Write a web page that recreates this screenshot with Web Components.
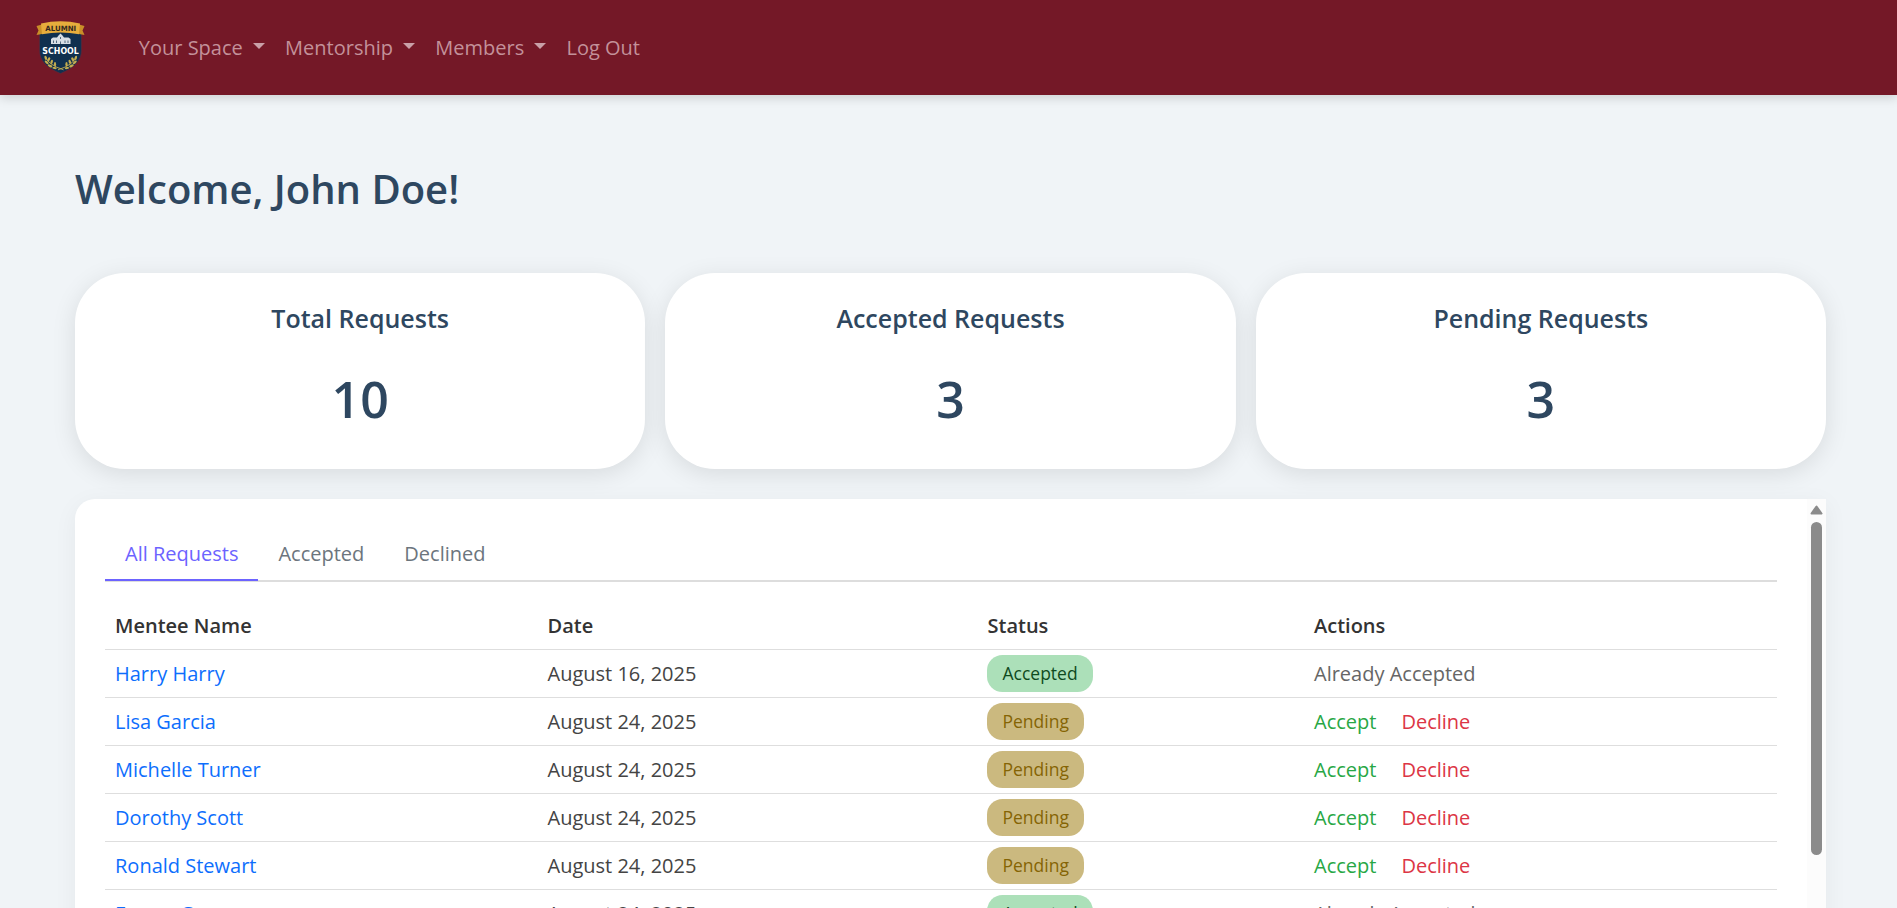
<!DOCTYPE html>
<html lang="en">
<head>
<meta charset="utf-8">
<title>Mentorship Dashboard</title>
<style>
html,body{margin:0;height:100%;overflow:hidden}
body{background:#f0f4f7;font:20px/27px "Open Sans","Noto Sans",sans-serif;color:#444}
</style>
</head>
<body>
<alumni-dashboard></alumni-dashboard>
<script>
const define = (name, html) => {
  const t = document.createElement('template');
  t.innerHTML = html;
  customElements.define(name, class extends HTMLElement {
    constructor() {
      super();
      this.attachShadow({ mode: 'open' }).appendChild(t.content.cloneNode(true));
    }
  });
};

define('school-crest', `<style>:host{display:block;width:50px;height:56px}svg{display:block}</style>
<svg width="50" height="56" viewBox="0 0 50 56">
<path d="M3.500 11H45.500V30C45.500 41 38 48 24.500 53.500C11 48 3.500 41 3.500 30Z" fill="#10304f" stroke="#5c2a3a" stroke-width=".6"/>
<path d="M.5 6L6 4.500V14L.5 15L2.500 10.500ZM48.500 6L43 4.500V14L48.500 15L46.500 10.500Z" fill="#c98f28"/>
<path d="M5 3.500Q24.500-.8 44 3.500L43 14.200Q24.500 10.700 6 14.200Z" fill="#e6ad3c"/>
<text x="24.700" y="10.800" font-family="DejaVu Sans,sans-serif" font-weight="700" font-size="7.300" textLength="31" lengthAdjust="spacingAndGlyphs" text-anchor="middle" fill="#33291f">ALUMNI</text>
<path d="M15 19L17 17.500H21L22.500 15.500L24.500 13.500L26.500 15.500L28 17.500H32.500L34.500 19V24H15Z" fill="#d7dee5"/>
<path d="M17.500 20.500V23M20.500 20.500V23M29 20.500V23M32 20.500V23M24.500 17V19M24.500 21.500V24" stroke="#53697f" stroke-width="1"/>
<text x="24.600" y="33.500" font-family="DejaVu Sans,sans-serif" font-weight="700" font-size="9.500" textLength="36.500" lengthAdjust="spacingAndGlyphs" text-anchor="middle" fill="#fff">SCHOOL</text>
<g id="l" fill="#c4ad50" transform="translate(0 .8)"><path d="M9.500 36Q12 44 27.500 49" fill="none" stroke="#c4ad50" stroke-width=".9"/>
<ellipse cx="9.700" cy="37" rx="1.200" ry="2.200" transform="rotate(-15 9.700 37)"/><ellipse cx="12.800" cy="38.500" rx="1.200" ry="2.200" transform="rotate(30 12.800 38.500)"/><ellipse cx="10.700" cy="41.500" rx="1.200" ry="2.400" transform="rotate(-50 10.700 41.500)"/><ellipse cx="15.700" cy="41" rx="1.200" ry="2.200" transform="rotate(15 15.700 41)"/><ellipse cx="14" cy="45" rx="1.200" ry="2.500" transform="rotate(-65 14 45)"/><ellipse cx="19" cy="43.500" rx="1.100" ry="2.200"/><ellipse cx="18.500" cy="47.300" rx="1" ry="2.200" transform="rotate(-80 18.500 47.300)"/></g>
<use href="#l" transform="matrix(-1 0 0 1 49.500 0)"/>
</svg>`);

define('nav-item', `<style>:host{display:flex;padding:0 10px;color:#c3919a}
i{display:none}:host([menu]) i{display:block;width:0;height:0;border:6px solid transparent;border-top-color:#c9a0a8;border-bottom:0;margin:9px 0 0 10.300px}</style><slot></slot><i></i>`);

define('nav-bar', `<style>:host{display:flex;align-items:center;box-sizing:border-box;height:95px;padding-left:36px;background:#741827;box-shadow:0 3px 10px rgba(0,0,0,.15);position:relative}
nav{display:flex;margin-left:42.800px}</style><school-crest></school-crest><nav><slot></slot></nav>`);

define('stat-card', `<style>:host{display:flex;flex-direction:column;align-items:center;flex:1;height:196px;box-sizing:border-box;padding-top:28px;background:#fff;border-radius:50px;box-shadow:0 5px 25px rgba(0,0,0,.1);color:#2e4760;font-weight:600}
h2{margin:0;font:600 25px/34px "Open Sans",sans-serif}div{font-size:50px;line-height:68px;margin-top:30px}</style>
<h2><slot name="title"></slot></h2><div><slot></slot></div>`);

define('tab-item', `<style>:host{display:block;padding:13px 20px 12px;height:27px;line-height:27px;color:#6c757d;border-bottom:2px solid transparent;margin-bottom:-1px}
:host([active]){color:#6c63ff;border-color:#6c63ff}</style><slot></slot>`);

define('tab-bar', `<style>:host{display:flex;border-bottom:2px solid #ddd;height:53px}</style><slot></slot>`);

define('status-pill', `<style>:host{display:inline-block;padding:6px 15.500px;line-height:25px;font-size:17.500px;border-radius:15.500px;margin:-5px 0 -5px -.5px;position:relative;top:-1px;background:#ace0b9;color:#0f4a1d}
:host([kind=pending]){background:#cbb97f;color:#856404}</style><slot></slot>`);

define('table-row', `<style>:host{display:grid;grid-template-columns:432.500px 440px 326.500px 1fr;align-items:center;height:47px;border-bottom:1px solid #dedede}
:host([head]){font-weight:600;color:#333}
::slotted(*){padding-left:10px}
</style><slot></slot>`);

define('scroll-bar', `<style>:host{display:flex;flex-direction:column;align-items:center;width:19px;background:#fcfcfc}
svg{display:block;margin-top:6px}div{width:11px;height:333px;margin-top:7px;border-radius:6px;background:#8b8b8b}</style>
<svg width="13" height="10" viewBox="0 0 13 10"><path d="M6.500 1.500L11.500 8.500H1.500Z" fill="#8b8b8b" stroke="#8b8b8b" stroke-width="2" stroke-linejoin="round"/></svg><div></div>`);

define('request-panel', `<style>:host{display:flex;background:#fff;border-radius:20px 0 0 20px;height:620px;box-shadow:0 5px 25px rgba(0,0,0,.05);overflow:hidden}
main{flex:1;padding:28px 30px 0}section{margin-top:20px}</style>
<main><slot name="tabs"></slot><section><slot></slot></section></main><scroll-bar></scroll-bar>`);

const rows = [
  ['Harry Harry', 'August 16, 2025', 1],
  ['Lisa Garcia', 'August 24, 2025', 0],
  ['Michelle Turner', 'August 24, 2025', 0],
  ['Dorothy Scott', 'August 24, 2025', 0],
  ['Ronald Stewart', 'August 24, 2025', 0],
  ['Emma Green', 'August 24, 2025', 1]
].map(([n, d, ok]) => `<table-row><span class="name">${n}</span><span>${d}</span><span>${ok
  ? '<status-pill kind="accepted">Accepted</status-pill></span><span class="done">Already Accepted</span>'
  : '<status-pill kind="pending">Pending</status-pill></span><span class="acts"><a class="yes">Accept</a><a class="no">Decline</a></span>'}</table-row>`).join('');

define('alumni-dashboard', `<style>:host{display:block;height:908px;overflow:hidden}
.page{padding:67px 71px 0 75px}
h1{margin:0;font:600 40px/54px "Open Sans",sans-serif;color:#2e4760}
.cards{display:flex;gap:20px;margin:57px 0 30px}
.name{color:#0d6efd}.done{color:#666}.acts{display:flex;gap:25px}.yes{color:#28a745}.no{color:#dc3545}
</style>
<nav-bar><nav-item menu>Your Space</nav-item><nav-item menu>Mentorship</nav-item><nav-item menu>Members</nav-item><nav-item>Log Out</nav-item></nav-bar>
<div class="page">
<h1>Welcome, John Doe!</h1>
<div class="cards">
<stat-card><span slot="title">Total Requests</span>10</stat-card>
<stat-card><span slot="title">Accepted Requests</span>3</stat-card>
<stat-card><span slot="title">Pending Requests</span>3</stat-card>
</div>
<request-panel>
<tab-bar slot="tabs"><tab-item active>All Requests</tab-item><tab-item>Accepted</tab-item><tab-item>Declined</tab-item></tab-bar>
<table-row head><span>Mentee Name</span><span>Date</span><span>Status</span><span>Actions</span></table-row>
${rows}
</request-panel>
</div>`);
</script>
</body>
</html>
